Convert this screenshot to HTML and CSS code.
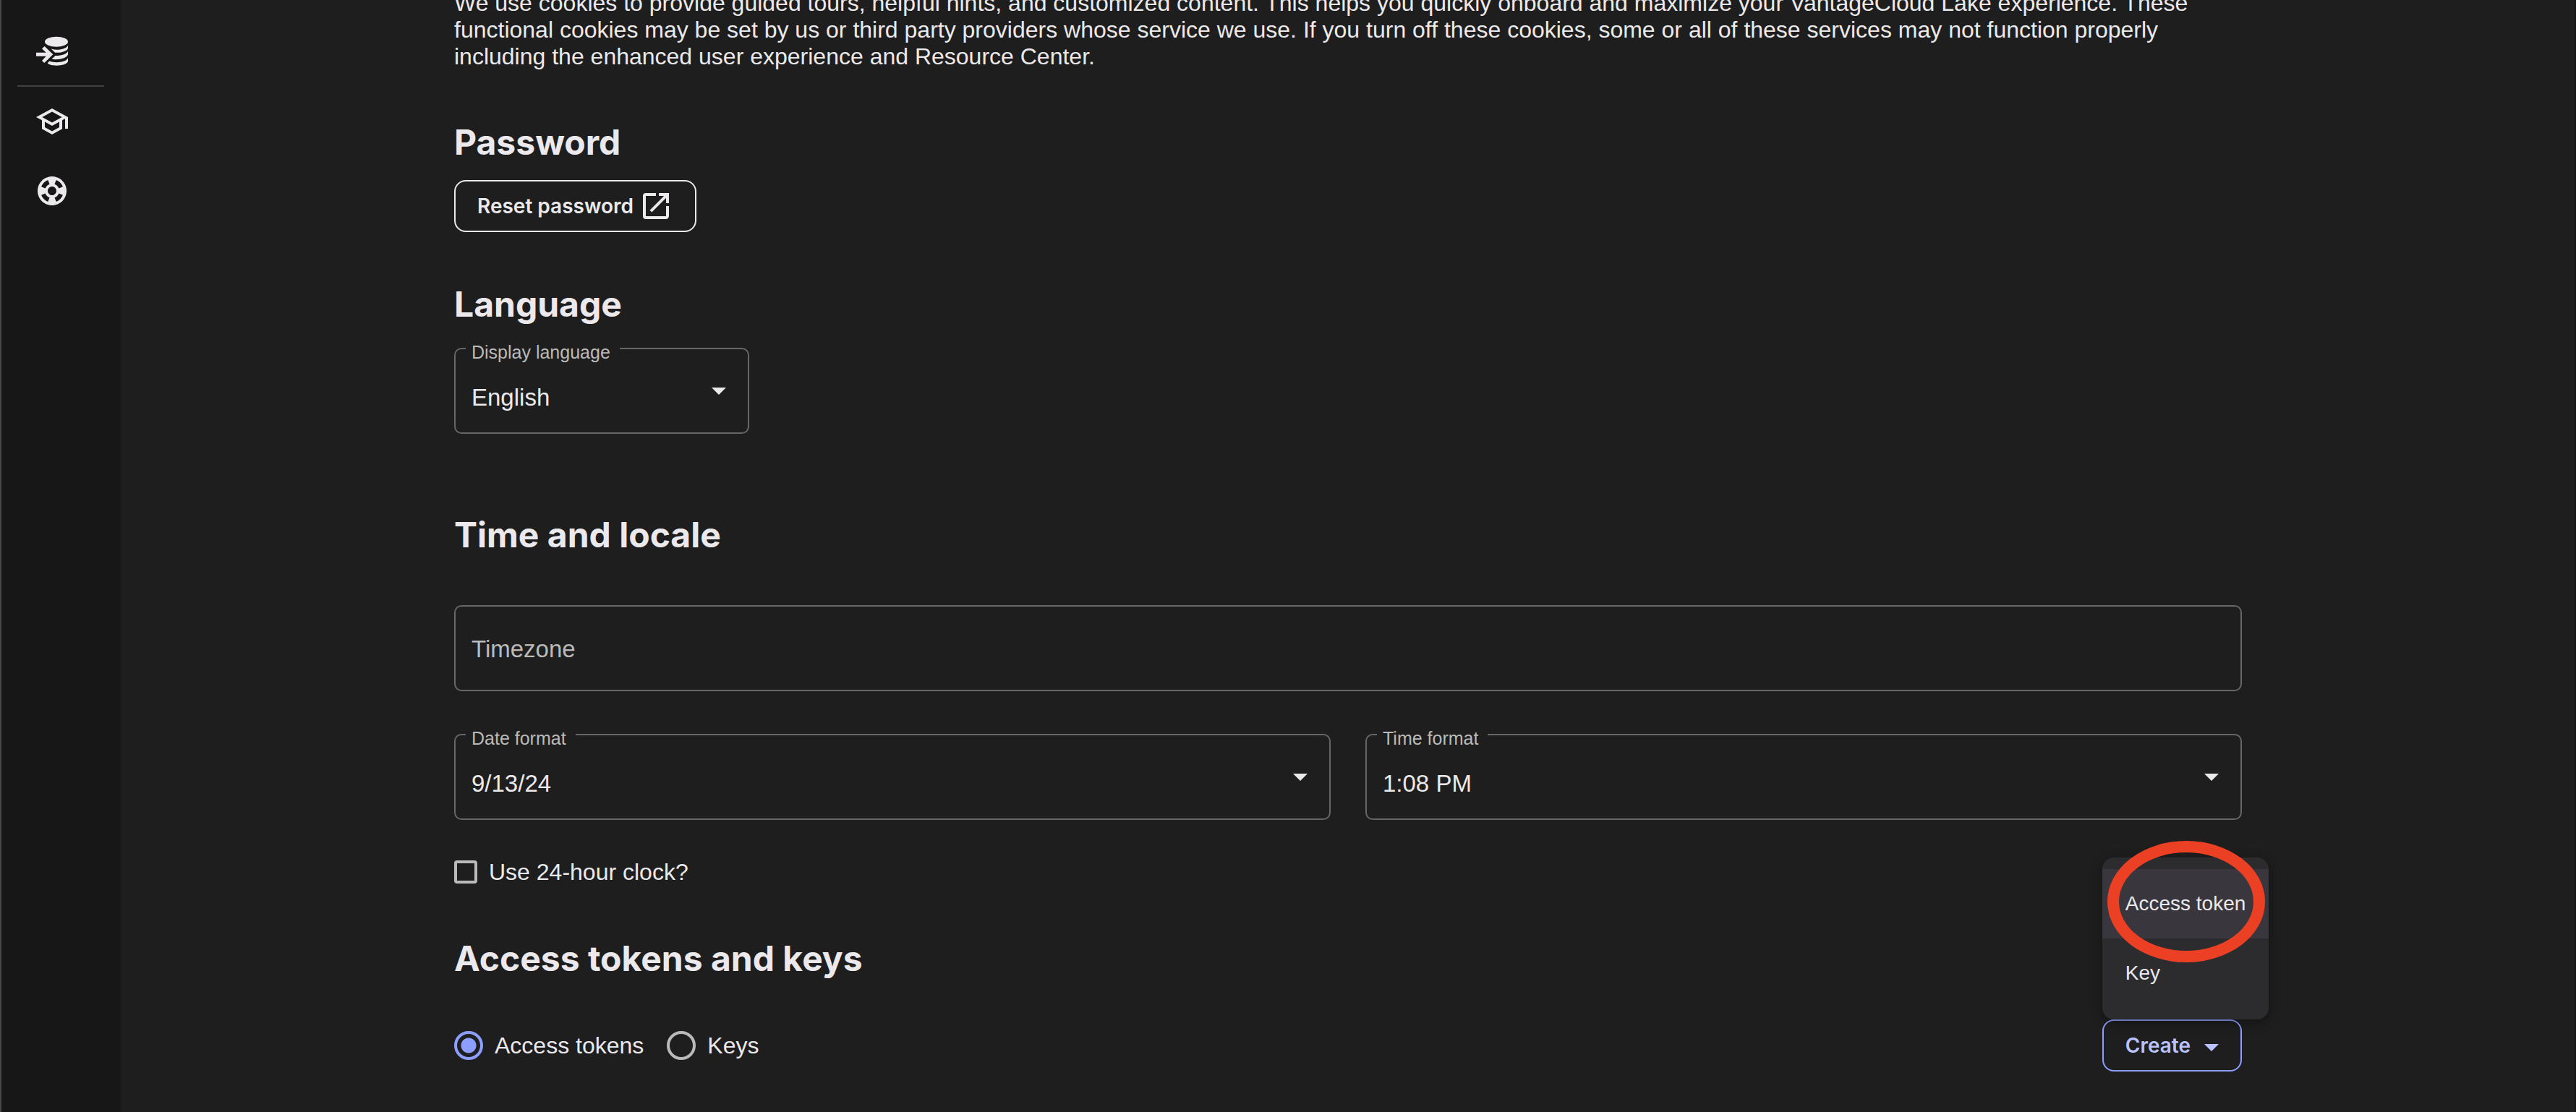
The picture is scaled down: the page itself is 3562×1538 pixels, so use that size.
FILE: index.html
```html
<!DOCTYPE html>
<html lang="en">
<head>
<meta charset="utf-8">
<title>Account settings</title>
<meta name="viewport" content="width=device-width, initial-scale=1">
<link rel="stylesheet" href="styles.css">
</head>
<body>
<div class="app">
  <nav class="rail" aria-label="Main">
    <a class="rail-link" href="#data" aria-label="Load data">
      <svg class="icon" viewBox="0 0 48 48" aria-hidden="true">
        <ellipse cx="30" cy="10.700" rx="16" ry="7"/>
        <path d="M22.700 20.500C32 23.500 44 20.500 46 15.700V19.700C45 23.500 37 26.500 28 25.700Z"/>
        <path d="M28.500 30C37 30.200 45 27.500 46 23.700V28.300C45 33 34 36.500 23.500 34.800Z"/>
        <path d="M20.300 37.500C29 41 44 39 46 33V38C45 41.500 38 43.700 30 43.700C24 43.700 19.500 42.500 17.700 40.300Z"/>
        <path d="M2 25.700V30.700H15.700L10 37L13.300 40L25.300 28.300L13.700 17L10 20.300L15.700 25.700Z"/>
      </svg>
    </a>
    <hr class="rail-divider">
    <a class="rail-link" href="#learn" aria-label="Learn">
      <svg class="icon" viewBox="0 0 24 24" aria-hidden="true"><path d="M12 3L1 9l4 2.180v6L12 21l7-3.820v-6l2-1.090V17h2V9L12 3zm6.820 6L12 12.720 5.180 9 12 5.280 18.820 9zM17 15.990l-5 2.730-5-2.730v-3.720L12 15l5-2.730v3.720z"/></svg>
    </a>
    <a class="rail-link" href="#support" aria-label="Support">
      <svg class="icon" viewBox="0 0 24 24" aria-hidden="true"><path d="M12 2C6.480 2 2 6.480 2 12s4.480 10 10 10 10-4.480 10-10S17.520 2 12 2zm7.460 7.120l-2.780 1.150c-.51-1.360-1.580-2.440-2.950-2.940l1.150-2.780c2.100.8 3.770 2.470 4.580 4.570zM12 15c-1.660 0-3-1.340-3-3s1.340-3 3-3 3 1.340 3 3-1.340 3-3 3zM9.130 4.540l1.170 2.780c-1.380.5-2.470 1.590-2.980 2.970L4.540 9.130c.81-2.110 2.480-3.780 4.590-4.590zM4.540 14.870l2.780-1.150c.51 1.380 1.590 2.460 2.970 2.960l-1.170 2.780c-2.100-.81-3.770-2.480-4.580-4.590zm10.340 4.590l-1.150-2.780c1.370-.51 2.450-1.590 2.950-2.970l2.780 1.170c-.81 2.100-2.480 3.770-4.580 4.580z"/></svg>
    </a>
  </nav>

  <main class="main">
    <div class="content">
      <p class="intro">We use cookies to provide guided tours, helpful hints, and customized content. This helps you quickly onboard and maximize your VantageCloud Lake experience. These functional cookies may be set by us or third party providers whose service we use. If you turn off these cookies, some or all of these services may not function properly including the enhanced user experience and Resource Center.</p>

      <section class="section">
        <h2 class="heading">Password</h2>
        <button class="button button-reset" type="button">Reset password
          <svg class="icon" viewBox="0 0 24 24" aria-hidden="true"><path d="M19 19H5V5h7V3H5a2 2 0 0 0-2 2v14a2 2 0 0 0 2 2h14c1.100 0 2-.9 2-2v-7h-2v7zM14 3v2h3.590l-9.830 9.830 1.410 1.410L19 6.410V10h2V3h-7z"/></svg>
        </button>
      </section>

      <section class="section section-language">
        <h2 class="heading">Language</h2>
        <div class="field field-select">
          <label class="field-label" for="language">Display language</label>
          <select class="field-control" id="language"><option>English</option></select>
        </div>
      </section>

      <section class="section section-time">
        <h2 class="heading">Time and locale</h2>
        <div class="time-fields">
          <div class="field field-wide">
            <input class="field-control" type="text" aria-label="Timezone" placeholder="Timezone">
          </div>
          <div class="field field-select">
            <label class="field-label" for="date-format">Date format</label>
            <select class="field-control" id="date-format"><option>9/13/24</option></select>
          </div>
          <div class="field field-select">
            <label class="field-label" for="time-format">Time format</label>
            <select class="field-control" id="time-format"><option>1:08 PM</option></select>
          </div>
        </div>
        <label class="choice"><input class="checkbox" type="checkbox">Use 24-hour clock?</label>
      </section>

      <section class="section section-tokens">
        <h2 class="heading">Access tokens and keys</h2>
        <div class="token-bar">
          <div class="choices">
            <label class="choice"><input class="radio" type="radio" name="kind" checked>Access tokens</label>
            <label class="choice"><input class="radio" type="radio" name="kind">Keys</label>
          </div>
          <div class="create">
            <button class="button button-create" type="button" aria-haspopup="menu" aria-expanded="true">Create</button>
            <div class="menu" role="menu">
              <button class="menu-item menu-item-active" type="button" role="menuitem">Access token</button>
              <button class="menu-item" type="button" role="menuitem">Key</button>
              <span class="highlight-ring" aria-hidden="true"></span>
            </div>
          </div>
        </div>
      </section>
    </div>
  </main>
</div>
</body>
</html>
```
FILE: styles.css
```css
:root {
  --bg: #1e1e1e;
  --rail: #171717;
  --text: #ebe9eb;
  --muted: #bababa;
  --outline: #666666;
  --accent: #8c9eff;
  --accent-text: #bac3ff;
}

* {
  box-sizing: border-box;
}

body {
  margin: 0;
  background: var(--bg);
  color: var(--text);
  font: 32px/37px "Liberation Sans", Arial, sans-serif;
}

button,
input,
select {
  margin: 0;
  color: inherit;
  font: inherit;
}

.app {
  display: flex;
  min-height: 100vh;
  overflow: hidden;
}

/* Navigation rail */
.rail {
  display: flex;
  flex: none;
  flex-direction: column;
  align-items: flex-start;
  width: 166px;
  padding: 23px 22px 0;
  border-left: 2px solid #474747;
  background: var(--rail);
}

.rail-link {
  display: grid;
  place-items: center;
  width: 96px;
  height: 96px;
}

.rail-divider {
  width: 120px;
  height: 2px;
  margin: -1px 0 0;
  border: 0;
  background: #424242;
}

.icon {
  display: block;
  width: 48px;
  height: 48px;
  fill: currentColor;
}

.rail .icon {
  color: var(--text);
}

/* Page content */
.main {
  flex: 1;
  min-width: 0;
  padding: 0 32px 56px;
  box-shadow: inset 2px 0 #191919, inset -2px 0 #151515;
}

.content {
  max-width: 2472px;
  margin: 0 auto;
}

.intro {
  margin: -14px 0 0;
}

.section {
  display: flex;
  flex-direction: column;
  align-items: flex-start;
  margin-top: 72px;
}

.heading {
  margin: 0;
  font: 700 48px/56px Inter, sans-serif;
}

/* Buttons */
.button {
  display: flex;
  align-items: center;
  height: 72px;
  padding: 0 30px;
  border: 2px solid currentColor;
  border-radius: 16px;
  background: transparent;
  font: 600 28px/40px Inter, sans-serif;
}

.button-reset {
  gap: 7px;
  margin-top: 24px;
}

.button-create {
  gap: 19px;
  border-color: var(--accent);
  color: var(--accent-text);
}

.button-create::after,
.field-select::after {
  content: "";
  width: 20px;
  height: 10px;
  background: currentColor;
  clip-path: polygon(0 0, 100% 0, 50% 100%);
}

.button-create::after {
  margin-top: 6px;
}

/* Outlined fields */
.field {
  position: relative;
}

.field-control {
  display: block;
  width: 100%;
  height: 119px;
  padding: 2px 22px 0;
  border: 2px solid var(--outline);
  border-radius: 10px;
  background: transparent;
  appearance: none;
  font-size: 33px;
}

.field-control::placeholder {
  color: var(--muted);
  opacity: 1;
}

.field-select .field-control {
  padding: 18px 80px 0 22px;
}

.field-select::after {
  position: absolute;
  top: 55px;
  right: 32px;
  pointer-events: none;
}

.field-label {
  position: absolute;
  top: -8px;
  left: 16px;
  padding: 0 13px 0 8px;
  background: var(--bg);
  color: var(--muted);
  font-size: 25px;
  line-height: 28px;
}

.section-language .field {
  width: 408px;
  max-width: 100%;
  margin-top: 32px;
}

.section-time {
  margin-top: 112px;
}

.time-fields {
  display: grid;
  grid-template-columns: 1fr 1fr;
  gap: 59px 48px;
  width: 100%;
  margin: 69px 0 52px;
}

.field-wide {
  grid-column: 1 / -1;
}

/* Tick boxes and radios */
.choice {
  display: flex;
  align-items: center;
  gap: 16px;
  line-height: 40px;
}

.checkbox,
.radio {
  flex: none;
  border: 4px solid var(--muted);
  appearance: none;
}

.checkbox {
  width: 32px;
  height: 32px;
  border-radius: 4px;
}

.radio {
  width: 40px;
  height: 40px;
  border-radius: 50%;
}

.radio:checked {
  border-color: var(--accent);
  background: radial-gradient(circle, var(--accent) 10px, transparent 11px);
}

.choices {
  display: flex;
  gap: 32px;
}

.token-bar {
  display: flex;
  align-items: center;
  justify-content: space-between;
  width: 100%;
  margin-top: 56px;
}

/* Create menu */
.create {
  position: relative;
}

.menu {
  position: absolute;
  bottom: 100%;
  left: 0;
  width: 230px;
  padding: 16px 0;
  border-radius: 16px;
  background: #2c2c2e;
  box-shadow: 0 4px 16px rgba(0, 0, 0, 0.4);
}

.menu-item {
  display: block;
  width: 100%;
  height: 96px;
  padding: 0 32px 2px;
  border: 0;
  background: transparent;
  font-size: 28px;
  text-align: left;
  white-space: nowrap;
}

.menu-item-active {
  background: #39373d;
}

.highlight-ring {
  position: absolute;
  top: -23px;
  left: 7px;
  width: 218px;
  height: 168px;
  border: 16px solid #ec4025;
  border-radius: 50%;
  pointer-events: none;
}
```
